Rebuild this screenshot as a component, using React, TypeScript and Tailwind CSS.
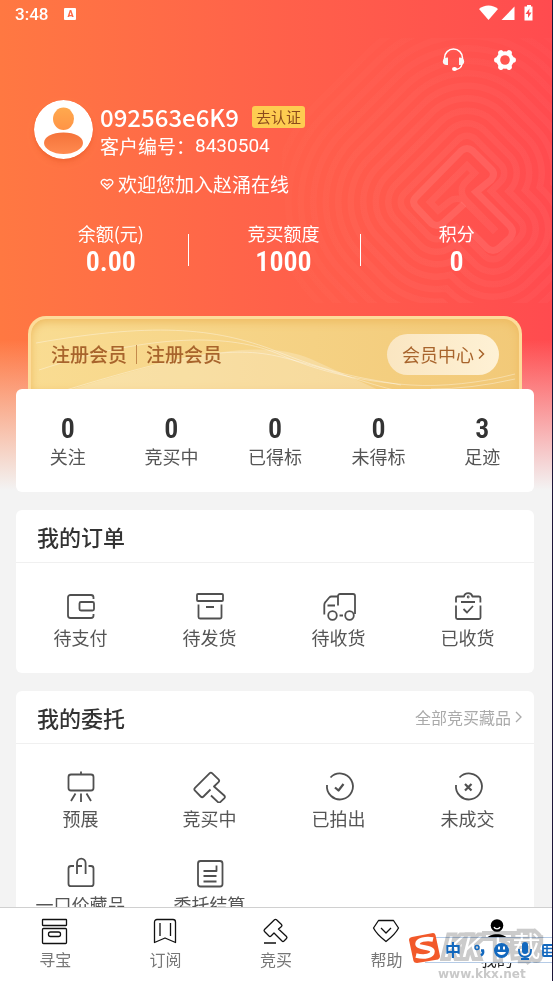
import type { ReactNode } from "react";

type Entry = {
  label: string;
  icon: ReactNode;
};

const balances = [
  { label: "余额(元)", value: "0.00" },
  { label: "竞买额度", value: "1000" },
  { label: "积分", value: "0" },
];

const counts = [
  { label: "关注", value: "0" },
  { label: "竞买中", value: "0" },
  { label: "已得标", value: "0" },
  { label: "未得标", value: "0" },
  { label: "足迹", value: "3" },
];

const orders: Entry[] = [
  {
    label: "待支付",
    icon: (
      <>
        <path d="M30.500 9V7.500a2.500 2.500 0 0 0-2.500-2.500H7.500A2.500 2.500 0 0 0 5 7.500v18A2.500 2.500 0 0 0 7.500 28H28a2.500 2.500 0 0 0 2.500-2.500V24" />
        <rect x="16.500" y="12" width="14.500" height="8.500" rx="1.500" />
      </>
    ),
  },
  {
    label: "待发货",
    icon: (
      <>
        <rect x="5" y="4" width="26" height="7" rx="1" />
        <path d="M6.500 14.500V27a1.500 1.500 0 0 0 1.500 1.500h20a1.500 1.500 0 0 0 1.500-1.500V14.500M14 17h8" />
      </>
    ),
  },
  {
    label: "待收货",
    icon: (
      <>
        <path d="M17 15.500V6a2 2 0 0 1 2-2h13a2 2 0 0 1 2 2v18M17 6.500h-6.500a3 3 0 0 0-2.200 1L4.500 12a4 4 0 0 0-1.200 3v9.500M6.500 15.500h7.500M18.500 25.500h3.500" />
        <circle cx="11.500" cy="25.500" r="4.300" />
        <circle cx="28.500" cy="25.500" r="4.300" />
      </>
    ),
  },
  {
    label: "已收货",
    icon: (
      <>
        <path d="M6 12.500V8a1.500 1.500 0 0 1 1.500-1.500h6.500a4.300 4.300 0 0 1 8.400 0h6.500a1.500 1.500 0 0 1 1.500 1.500v4.500M6 15.500V27.500A1.500 1.500 0 0 0 7.500 29H29a1.500 1.500 0 0 0 1.500-1.500V15.500M11 12h14M13.500 19l3.500 3.500 6-6.500" />
        <circle cx="18.200" cy="7" r="0.500" />
      </>
    ),
  },
];

const consignments: Entry[] = [
  {
    label: "预展",
    icon: (
      <>
        <rect x="5.500" y="3.500" width="25" height="16" rx="2.500" />
        <path d="M18 0.500v3M12.500 22.500l-4.500 7.500M18 22.500v8.500M23.500 22.500l4.500 7.500" />
      </>
    ),
  },
  {
    label: "竞买中",
    icon: (
      <path d="M18.500 18.500l-7 7a2 2 0 0 1-2.800 0l-5.700-5.800a2 2 0 0 1 0-2.800L17.500 2.300a2 2 0 0 1 2.800 0l6.200 6a2 2 0 0 1 0 2.800L22 15.500l10.200 9a2 2 0 0 1 0 2.800l-3.700 3.600a2 2 0 0 1-2.800 0L19 24.500" />
    ),
  },
  {
    label: "已拍出",
    icon: (
      <>
        <path d="M9.500 6.500A13 13 0 1 1 6 14" />
        <path d="M14 16.500l3.500 3 5-6.500" strokeWidth="2.200" />
      </>
    ),
  },
  {
    label: "未成交",
    icon: (
      <>
        <path d="M9.500 6.500A13 13 0 1 1 6 14" />
        <path d="M15 13l6.500 6.500M21.500 13L15 19.500" strokeWidth="2.200" />
      </>
    ),
  },
  {
    label: "一口价藏品",
    icon: (
      <path d="M11 9H8a2.500 2.500 0 0 0-2.500 2.500v15.200a2.500 2.500 0 0 0 2.500 2.500h20a2.500 2.500 0 0 0 2.500-2.500V11.500A2.500 2.500 0 0 0 28 9h-2.500M14 17V6a4.300 4.300 0 0 1 8.600 0v11M14 9h5" />
    ),
  },
  {
    label: "委托结算",
    icon: (
      <>
        <rect x="6" y="4" width="24.500" height="25.500" rx="2.500" />
        <path d="M24.500 8.500v5.500h-13M11.500 19h13M11.500 24.500h13" />
      </>
    ),
  },
];

const tabs: Entry[] = [
  {
    label: "寻宝",
    icon: (
      <>
        <rect x="3.500" y="1.500" width="24" height="6" rx="0.500" />
        <rect x="3.500" y="10.500" width="24" height="15" rx="1" />
        <rect x="9.500" y="14" width="12" height="4.500" rx="2" />
      </>
    ),
  },
  {
    label: "订阅",
    icon: (
      <path d="M4.500 24.500V4a2.500 2.500 0 0 1 2.500-2.500h16A2.500 2.500 0 0 1 25.500 4v20.500l-10.500-4.500zM10 5v13M20.500 5v13" />
    ),
  },
  {
    label: "竞买",
    icon: (
      <path d="M4.500 13.500a1.500 1.500 0 0 1 0-2L14.500 1.800a1.500 1.500 0 0 1 2 0l5 4.700a1.500 1.500 0 0 1 0 2L18.500 11l8 7.500a1.500 1.500 0 0 1 0 2l-2.500 2.500a1.500 1.500 0 0 1-2 0l-8-8-3 3a1.500 1.500 0 0 1-2 0zM4 25h12" />
    ),
  },
  {
    label: "帮助",
    icon: <path d="M8.500 2.500h15l5 7.500c-3 6-8 10-12.500 13.500C11.500 20 6.500 16 3.500 10zM11 10l5 5 5-5" />,
  },
  {
    label: "我的",
    icon: (
      <>
        <circle cx="16" cy="7.500" r="6.300" fill="#000" stroke="none" />
        <path d="M5 21c3-6.500 19-6.500 22 0z" fill="#000" stroke="none" />
        <path d="M13 9c1 2.500 5 2.500 6 0" stroke="#fff" />
      </>
    ),
  },
];

const GAVEL = "M467 148l25 25-18 18 37 38-18 18-27-27-9-9-20 16-24-25z";
const RINGS = [11, 10, 9, 8, 7, 6, 5, 4, 3, 2, 1];

function GavelPattern() {
  return (
    <svg
      aria-hidden="true"
      className="pointer-events-none absolute right-0 top-[38px] h-[265px] w-[270px]"
      viewBox="282 38 270 265"
    >
      <defs>
        <mask height="265" id="rings" maskUnits="userSpaceOnUse" width="270" x="282" y="38">
          <g fill="none" strokeLinejoin="round">
            {RINGS.map((n) => (
              <g key={n}>
                <path d={GAVEL} stroke="#fff" strokeWidth={25 * n + 6} />
                <path d={GAVEL} stroke="#000" strokeWidth={25 * n - 7} />
              </g>
            ))}
          </g>
        </mask>
        <radialGradient cx="467" cy="200" gradientUnits="userSpaceOnUse" id="ringFade" r="185">
          <stop offset="0" stopColor="#fff" stopOpacity="0.06" />
          <stop offset="1" stopColor="#fff" stopOpacity="0.015" />
        </radialGradient>
      </defs>
      <rect fill="url(#ringFade)" height="265" mask="url(#rings)" width="270" x="282" y="38" />
      <path
        d="M464 204l-21 19q-6 5-12 0l-15-16q-5-5 0-10l45-46q6-5 12 0l18 18q5 5 0 11l-15 12 34 34q5 6 0 12l-11 10q-6 5-12 0l-19-19"
        fill="none"
        stroke="#fff"
        strokeOpacity="0.09"
        strokeWidth="7"
      />
    </svg>
  );
}

function StatusBar() {
  return (
    <div className="flex h-7 items-center pl-[15px] pr-[17px] text-white">
      <span className="font-[Roboto] text-[17px] font-medium leading-7">3:48</span>
      <span className="ml-4 flex size-3 items-center justify-center rounded-[1px] bg-white font-[Roboto] text-[9px] font-black leading-3 text-[#ff6a48]">
        A
      </span>
      <svg aria-hidden="true" className="ml-auto h-[18px] w-14" fill="currentColor" viewBox="0 0 56 18">
        <path d="M0 4C5-.8 14-.8 19 4L9.500 15z" />
        <path d="M22.500 15L35.500 1.500V15z" />
        <path d="M48 0h4v1.500h1.500v14h-8V1.500H48z" />
        <path d="M50.500 3.500l-4 5.500h2.500v4l3.500-5.500H50z" fill="#ff4d50" />
      </svg>
    </div>
  );
}

function Toolbar() {
  return (
    <div className="flex h-16 items-center justify-end gap-[29px] pr-9 text-white">
      <button aria-label="客服" type="button">
        <svg className="h-6 w-[23px]" fill="none" viewBox="0 0 23 24">
          <path d="M2.500 12V10a9 9 0 0 1 18 0v2" stroke="#fff" strokeWidth="1.500" />
          <path d="M6 9.500v7.500C2.500 17.500.8 16 .8 13.500S2.500 9.700 6 9.500zM17 9.500v7.500c3.500.5 5.200-1 5.200-3.500S20.500 9.700 17 9.500z" fill="#f6f6f6" />
          <path d="M20 16c-.5 3-3 5.500-7.500 5.500" stroke="#fff" strokeWidth="1.500" />
          <ellipse cx="12.500" cy="21" fill="#fff" rx="2.500" ry="2" />
        </svg>
      </button>
      <button aria-label="设置" type="button">
        <svg className="h-6 w-[22px]" fill="none" viewBox="0 0 22 24">
          <circle cx="11" cy="12" fill="#fff" r="8.800" />
          <path
            d="M2.800 12h16.400M6.900 4.900l8.200 14.200M15.100 4.900L6.900 19.100"
            stroke="#fff"
            strokeLinecap="round"
            strokeWidth="5.500"
          />
          <circle cx="11" cy="12" fill="#ff5550" r="4.800" />
        </svg>
      </button>
    </div>
  );
}

function Profile() {
  return (
    <div className="flex gap-[7px] pl-[34px] pt-2 text-white">
      <svg aria-label="头像" className="size-[59px] shrink-0 rounded-full shadow-md shadow-orange-700/20" role="img" viewBox="0 0 59 59">
        <defs>
          <linearGradient id="head" x1="0" x2="0" y1="0" y2="1">
            <stop offset="0" stopColor="#ffa94e" />
            <stop offset="1" stopColor="#ff9446" />
          </linearGradient>
          <linearGradient id="body" x1="0" x2="0" y1="0" y2="1">
            <stop offset="0" stopColor="#f5733a" />
            <stop offset="1" stopColor="#ff8a50" />
          </linearGradient>
        </defs>
        <circle cx="29.500" cy="29.500" fill="#fff" r="29.500" />
        <path d="M10 43c0-6 8-10.500 19.500-10.500S49 37 49 43c0 6-9 11-19.500 11S10 49 10 43z" fill="url(#body)" />
        <ellipse cx="29.500" cy="18.800" fill="url(#head)" rx="10.500" ry="11.200" />
      </svg>
      <div>
        <div className="flex h-[34px] items-center gap-[13px]">
          <h1 className="text-[24px] font-medium leading-8">092563e6K9</h1>
          <button
            className="h-[22px] rounded-[3px] bg-[#fecc51] px-1 text-[15px] leading-[22px] text-[#8c4a1c]"
            type="button"
          >
            去认证
          </button>
        </div>
        <p className="flex h-6 items-center text-[19px] leading-6">
          客户编号：<span className="font-[Roboto]">8430504</span>
        </p>
        <p className="mt-[14px] flex h-6 items-center gap-1 text-[19px] leading-6">
          <svg aria-hidden="true" className="h-3 w-[14px]" fill="none" stroke="#fff" strokeWidth="1.300" viewBox="0 0 14 12">
            <path d="M7 11L2 6.300C-.3 3.500 3.500-.5 7 2.800c3.500-3.300 7.300.7 5 3.500zM4 5l3 2.500 2.500-2" />
          </svg>
          欢迎您加入赵涌在线
        </p>
      </div>
    </div>
  );
}

function Balances() {
  return (
    <div className="mt-[25px] grid grid-cols-3 text-white">
      {balances.map((item, index) => (
        <div className="flex items-center pl-[18px]" key={item.label}>
          <div className="flex-1 text-center">
            <p className="text-[18px] leading-6">{item.label}</p>
            <p className="font-['Roboto_Condensed',Roboto,sans-serif] text-[28px] font-semibold leading-[34px]">
              {item.value}
            </p>
          </div>
          {index < balances.length - 1 ? <span className="h-8 w-px bg-white" /> : null}
        </div>
      ))}
    </div>
  );
}

function MemberBanner() {
  return (
    <div className="relative mx-3 mt-[37px] flex h-[73px] items-center overflow-hidden rounded-t-[18px] border-x-3 border-t-3 border-[#fddc9b] bg-linear-to-r from-[#f9dc92] to-[#f2c978] pl-5 pr-5 text-[#a8642c] shadow-[inset_0_3px_8px_#eebb62]">
      <svg aria-hidden="true" className="absolute inset-0 size-full" fill="none" preserveAspectRatio="none" viewBox="0 0 488 70">
        <path d="M35 72C150 36 230 18 280 40L350 72z" fill="#fff" fillOpacity="0.22" />
        <g stroke="#fff" strokeOpacity="0.35">
          <path d="M5 24C130 2 190 10 250 34S340 60 370 66M8 51C120 14 200 14 250 36S350 64 380 66 450 64 484 55M35 71C150 36 200 26 250 38S350 70 370 72M400 70Q440 70 484 60" />
        </g>
      </svg>
      <div className="relative flex flex-1 items-center text-[19px] font-medium leading-6">
        <span>注册会员</span>
        <span className="mx-[9px] h-[19px] w-px bg-[#c48a4c]" />
        <span>注册会员</span>
      </div>
      <button
        className="relative flex h-[41px] items-center gap-1 rounded-full bg-linear-to-r from-[#fae6c1] to-[#fef1d5] pl-[15px] pr-[14px] text-[18px] leading-6"
        type="button"
      >
        会员中心
        <svg aria-hidden="true" className="h-3 w-[7px]" fill="none" stroke="currentColor" strokeWidth="1.500" viewBox="0 0 7 12">
          <path d="M1 1.500L5.500 6 1 10.500" />
        </svg>
      </button>
    </div>
  );
}

function EntryGrid({ entries }: { entries: Entry[] }) {
  return (
    <div className="grid grid-cols-4 gap-y-6 pb-[21px] pr-0.5 pt-[27px]">
      {entries.map((entry) => (
        <a className="flex flex-col items-center" href="#" key={entry.label}>
          <svg
            aria-hidden="true"
            className="h-8 w-9"
            fill="none"
            stroke="#505050"
            strokeLinejoin="round"
            strokeWidth="1.800"
            viewBox="0 0 36 32"
          >
            {entry.icon}
          </svg>
          <span className="whitespace-nowrap text-[18px] leading-[30px] text-[#555]">{entry.label}</span>
        </a>
      ))}
    </div>
  );
}

function Section({ title, more, entries }: { title: string; more?: string; entries: Entry[] }) {
  return (
    <section className="mt-[18px] rounded-md bg-white">
      <header className="flex h-[53px] items-center justify-between border-b border-[#f0f0f0] pl-[21px] pr-3">
        <h2 className="text-[22px] font-medium leading-8 text-[#333]">{title}</h2>
        {more ? (
          <a className="flex items-center gap-1 text-[16px] leading-6 text-[#aaa]" href="#">
            {more}
            <svg aria-hidden="true" className="h-3 w-[7px]" fill="none" stroke="currentColor" strokeWidth="1.300" viewBox="0 0 7 12">
              <path d="M1 1l5 5-5 5" />
            </svg>
          </a>
        ) : null}
      </header>
      <EntryGrid entries={entries} />
    </section>
  );
}

function TabBar() {
  return (
    <nav className="grid h-[74px] shrink-0 grid-cols-5 border-t border-[#d0d0d0] bg-white pt-[10px]">
      {tabs.map((tab) => (
        <a className="flex flex-col items-center" href="#" key={tab.label}>
          <svg
            aria-hidden="true"
            className="h-7 w-8"
            fill="none"
            stroke="#111"
            strokeLinejoin="round"
            strokeWidth="1.300"
            viewBox="0 0 32 28"
          >
            {tab.icon}
          </svg>
          <span className={tab.label === "我的" ? "text-[16px] leading-[26px] text-[#222]" : "text-[16px] leading-[26px] text-[#777]"}>
            {tab.label}
          </span>
        </a>
      ))}
    </nav>
  );
}

// Floating input method bar with the site mark behind its keys
function InputMethodBar() {
  return (
    <div className="absolute bottom-0 right-0 h-[56px] w-[143px] overflow-hidden">
      <div className="absolute left-4 right-0 top-3 h-[26px] border-y border-[#b5cbe6] bg-white" />
      <span className="absolute left-[33px] top-0 whitespace-nowrap text-[28px] leading-10 text-white mix-blend-multiply [-webkit-text-stroke:8px_#cbcbcb] [paint-order:stroke_fill]">
        <i>KK</i> 下载
      </span>
      <span className="absolute bottom-0 left-[29px] font-['DejaVu_Sans'] text-[12px] font-bold leading-[14px] text-[#c9c9c9]">
        www.kkx.net
      </span>
      <svg aria-hidden="true" className="absolute left-0 top-[7px] h-8 w-8" viewBox="0 0 32 32">
        <path d="M3 5L24 1q2 0 2.500 2L31 24q0 3-2 3.500L8 31q-3 0-3.500-2L0 8q0-2.500 3-3z" fill="#f2592a" />
        <path d="M24 7.500C17 6 8.500 8 8.500 12s15 3 15 7.500-8 6-16.500 4" fill="none" stroke="#fff" strokeWidth="4.500" />
      </svg>
      <span className="absolute left-9 top-3 text-[16px] font-bold leading-6 text-[#1268be]">中</span>
      <svg aria-hidden="true" className="absolute left-[62px] top-3 h-[26px] w-[81px]" fill="none" viewBox="0 0 81 26">
        <g stroke="#1268be">
          <circle cx="6" cy="10.500" r="2" strokeWidth="1.500" />
          <path d="M10 13.500h2c.5 2-.5 4-2 5" strokeWidth="2.500" />
          <path d="M48 12v2a6 6 0 0 0 12 0v-2M54 19v3M50 22h8" strokeWidth="1.800" />
          <rect height="11" rx="1" strokeWidth="1.800" width="18" x="72" y="8" />
          <path d="M72 11.500h9M72 15.500h9M76 8v11" strokeWidth="1.500" />
        </g>
        <circle cx="30.500" cy="13.500" fill="#1268be" r="7.500" />
        <rect fill="#1268be" height="12" rx="3" width="6" x="51" y="5" />
        <path d="M28 9.500v3M33 9.500v3" stroke="#fff" strokeWidth="2" />
        <path d="M26 15c1.500 4 7.500 4 9 0z" fill="#fff" />
      </svg>
    </div>
  );
}

export default function App() {
  return (
    <div className="relative flex h-screen flex-col overflow-hidden border-r border-[#1c1638] bg-[#f3f3f3] font-['Noto_Sans_CJK_SC',sans-serif]">
      <main className="relative min-h-0 flex-1 overflow-hidden">
        <div className="absolute inset-x-0 top-0 h-[490px] bg-linear-to-r from-[#ff7842] via-[#ff614a] to-[#ff4b4f]" />
        <div className="absolute inset-x-0 top-[340px] h-[150px] bg-linear-to-b from-[#f3f3f300] to-[#f3f3f3]" />
        <GavelPattern />
        <div className="relative">
          <StatusBar />
          <Toolbar />
          <Profile />
          <div className="pl-4 pr-[18px]">
            <Balances />
            <MemberBanner />
            <div className="relative grid grid-cols-5 rounded-md bg-white pb-[25px] pt-6 text-center">
              {counts.map((item) => (
                <a href="#" key={item.label}>
                  <span className="block font-['Roboto_Condensed',Roboto,sans-serif] text-[28px] font-semibold leading-8 text-[#333]">
                    {item.value}
                  </span>
                  <span className="block text-[18px] leading-[22px] text-[#555]">{item.label}</span>
                </a>
              ))}
            </div>
            <Section entries={orders} title="我的订单" />
            <Section entries={consignments} more="全部竞买藏品" title="我的委托" />
          </div>
        </div>
      </main>
      <TabBar />
      <InputMethodBar />
    </div>
  );
}
